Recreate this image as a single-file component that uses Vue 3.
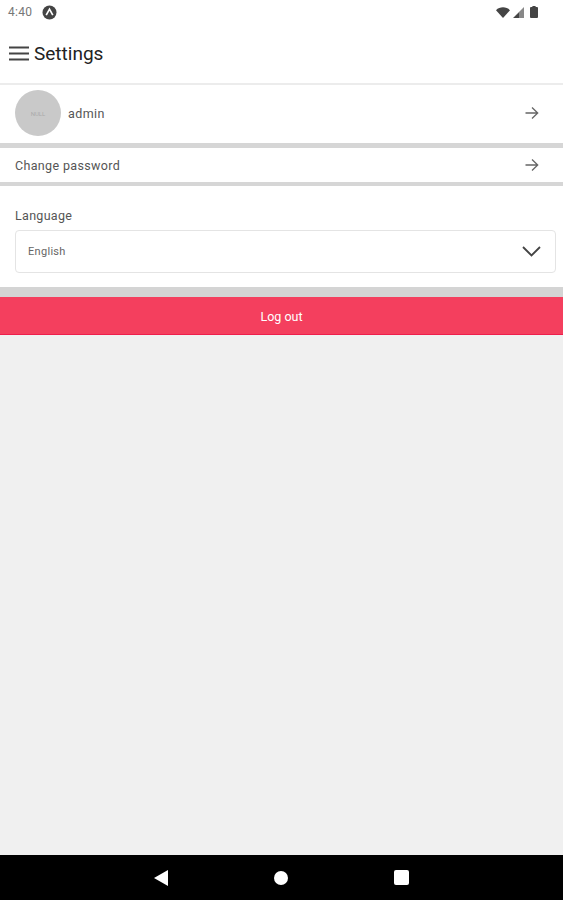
<template>
  <div class="screen">
    <div class="status-bar">
      <div class="status-left">
        <span class="time">4:40</span>
        <svg class="app-badge" width="15" height="15" viewBox="0 0 15 15">
          <circle cx="7.5" cy="7.5" r="7" fill="#444" />
          <path d="M4.2 10.2 7.5 4.2l3.3 6" fill="none" stroke="#fff" stroke-width="1.7" />
        </svg>
      </div>
      <div class="status-right">
        <svg width="14" height="11" viewBox="0 0 14 11"><path d="M0 3.2C3.8-.6 10.2-.6 14 3.2L7 11z" fill="#444" /></svg>
        <svg width="11" height="11" viewBox="0 0 11 11"><path d="M11 0v11H0z" fill="#888" /><path d="M6 5.4V11H0.4z" fill="#444" /></svg>
        <svg class="battery" width="8" height="12" viewBox="0 0 8 12"><path d="M2.4 0h3.2v1H7a1 1 0 0 1 1 1v9a1 1 0 0 1-1 1H1a1 1 0 0 1-1-1V2a1 1 0 0 1 1-1h1.400z" fill="#444" /></svg>
      </div>
    </div>

    <header class="top-bar">
      <svg class="menu" width="20" height="15" viewBox="0 0 20 15">
        <path d="M0 1.500h20M0 7.500h20M0 13.500h20" stroke="#444" stroke-width="2.200" />
      </svg>
      <h1>Settings</h1>
    </header>

    <section class="row profile">
      <div class="avatar"><span>NULL</span></div>
      <span class="name">admin</span>
      <svg class="arrow" width="14" height="14" viewBox="0 0 14 14"><path d="M0.500 7h12M7 1.500 12.700 7 7 12.500" fill="none" stroke="#666" stroke-width="1.300" /></svg>
    </section>

    <section class="row password">
      <span>Change password</span>
      <svg class="arrow" width="14" height="14" viewBox="0 0 14 14"><path d="M0.500 7h12M7 1.500 12.700 7 7 12.500" fill="none" stroke="#666" stroke-width="1.300" /></svg>
    </section>

    <section class="language">
      <label>Language</label>
      <div class="select">
        <span>English</span>
        <svg width="19" height="11" viewBox="0 0 19 11"><path d="M1 1l8.500 8.500L18 1" fill="none" stroke="#444" stroke-width="1.800" /></svg>
      </div>
    </section>

    <button class="logout">Log out</button>

    <div class="spacer"></div>

    <nav class="nav-bar">
      <svg width="14" height="16" viewBox="0 0 14 16"><path d="M14 0v16L0 8z" fill="#fff" /></svg>
      <svg width="14" height="14" viewBox="0 0 14 14"><circle cx="7" cy="7" r="7" fill="#fff" /></svg>
      <svg width="15" height="15" viewBox="0 0 15 15"><rect width="15" height="15" rx="2" fill="#fff" /></svg>
    </nav>
  </div>
</template>

<script setup>
</script>

<style>
body {
  margin: 0;
}
</style>

<style scoped>
.screen {
  width: 563px;
  height: 900px;
  display: flex;
  flex-direction: column;
  background: #f0f0f0;
  font-family: Roboto, "Liberation Sans", sans-serif;
  overflow: hidden;
}

.status-bar {
  height: 24px;
  background: #fff;
  display: flex;
  justify-content: space-between;
  align-items: center;
  padding: 0 25px 0 8px;
}

.status-left,
.status-right {
  display: flex;
  align-items: center;
}

.status-left {
  gap: 10px;
}

.status-right {
  gap: 3px;
}

.battery {
  margin-left: 3px;
}

.time {
  font-size: 12px;
  color: #777;
  letter-spacing: 0.3px;
}

.top-bar {
  height: 59px;
  background: #fff;
  border-bottom: 2px solid #ececec;
  display: flex;
  align-items: center;
  gap: 5px;
  padding-left: 9px;
}

h1 {
  margin: 0;
  font-size: 19px;
  font-weight: 400;
  color: #222;
}

.row {
  background: #fff;
  display: flex;
  align-items: center;
  padding: 0 24px 0 15px;
  color: #555;
  font-size: 12.500px;
}

.arrow {
  margin-left: auto;
}

.profile {
  height: 58px;
  border-bottom: 5px solid #d6d6d6;
  gap: 7px;
  align-items: flex-start;
}

.avatar {
  width: 46px;
  height: 46px;
  margin-top: 5px;
  border-radius: 50%;
  background: #c9c9c9;
  display: flex;
  align-items: center;
  justify-content: center;
}

.avatar span {
  font-size: 6px;
  color: #aaa;
}

.name {
  letter-spacing: 0.4px;
  line-height: 15px;
  margin-top: 21px;
}

.profile .arrow {
  margin-top: 21px;
}

.password {
  height: 34px;
  border-bottom: 4px solid #d6d6d6;
  letter-spacing: 0.35px;
}

.language {
  background: #fff;
  height: 111px;
  padding: 22px 7px 0 15px;
  box-sizing: border-box;
  border-bottom: 10px solid #d4d4d4;
}

.language label {
  display: block;
  font-size: 12.500px;
  color: #555;
  letter-spacing: 0.3px;
  line-height: 15px;
  margin-bottom: 7px;
}

.select {
  height: 43px;
  box-sizing: border-box;
  border: 1px solid #e4e4e4;
  border-radius: 4px;
  display: flex;
  align-items: center;
  justify-content: space-between;
  padding: 0 14px 0 12px;
  font-size: 11px;
  color: #666;
  letter-spacing: 0.3px;
}

.logout {
  display: block;
  width: 100%;
  height: 38px;
  flex: none;
  border: none;
  border-bottom: 1px solid #ee1e4c;
  padding: 2px 0 0;
  background: #f43f5e;
  color: #fff;
  font-family: inherit;
  font-size: 12.500px;
}

.spacer {
  flex: 1;
}

.nav-bar {
  height: 45px;
  flex: none;
  background: #000;
  display: flex;
  align-items: center;
  justify-content: center;
  gap: 106px;
}
</style>
